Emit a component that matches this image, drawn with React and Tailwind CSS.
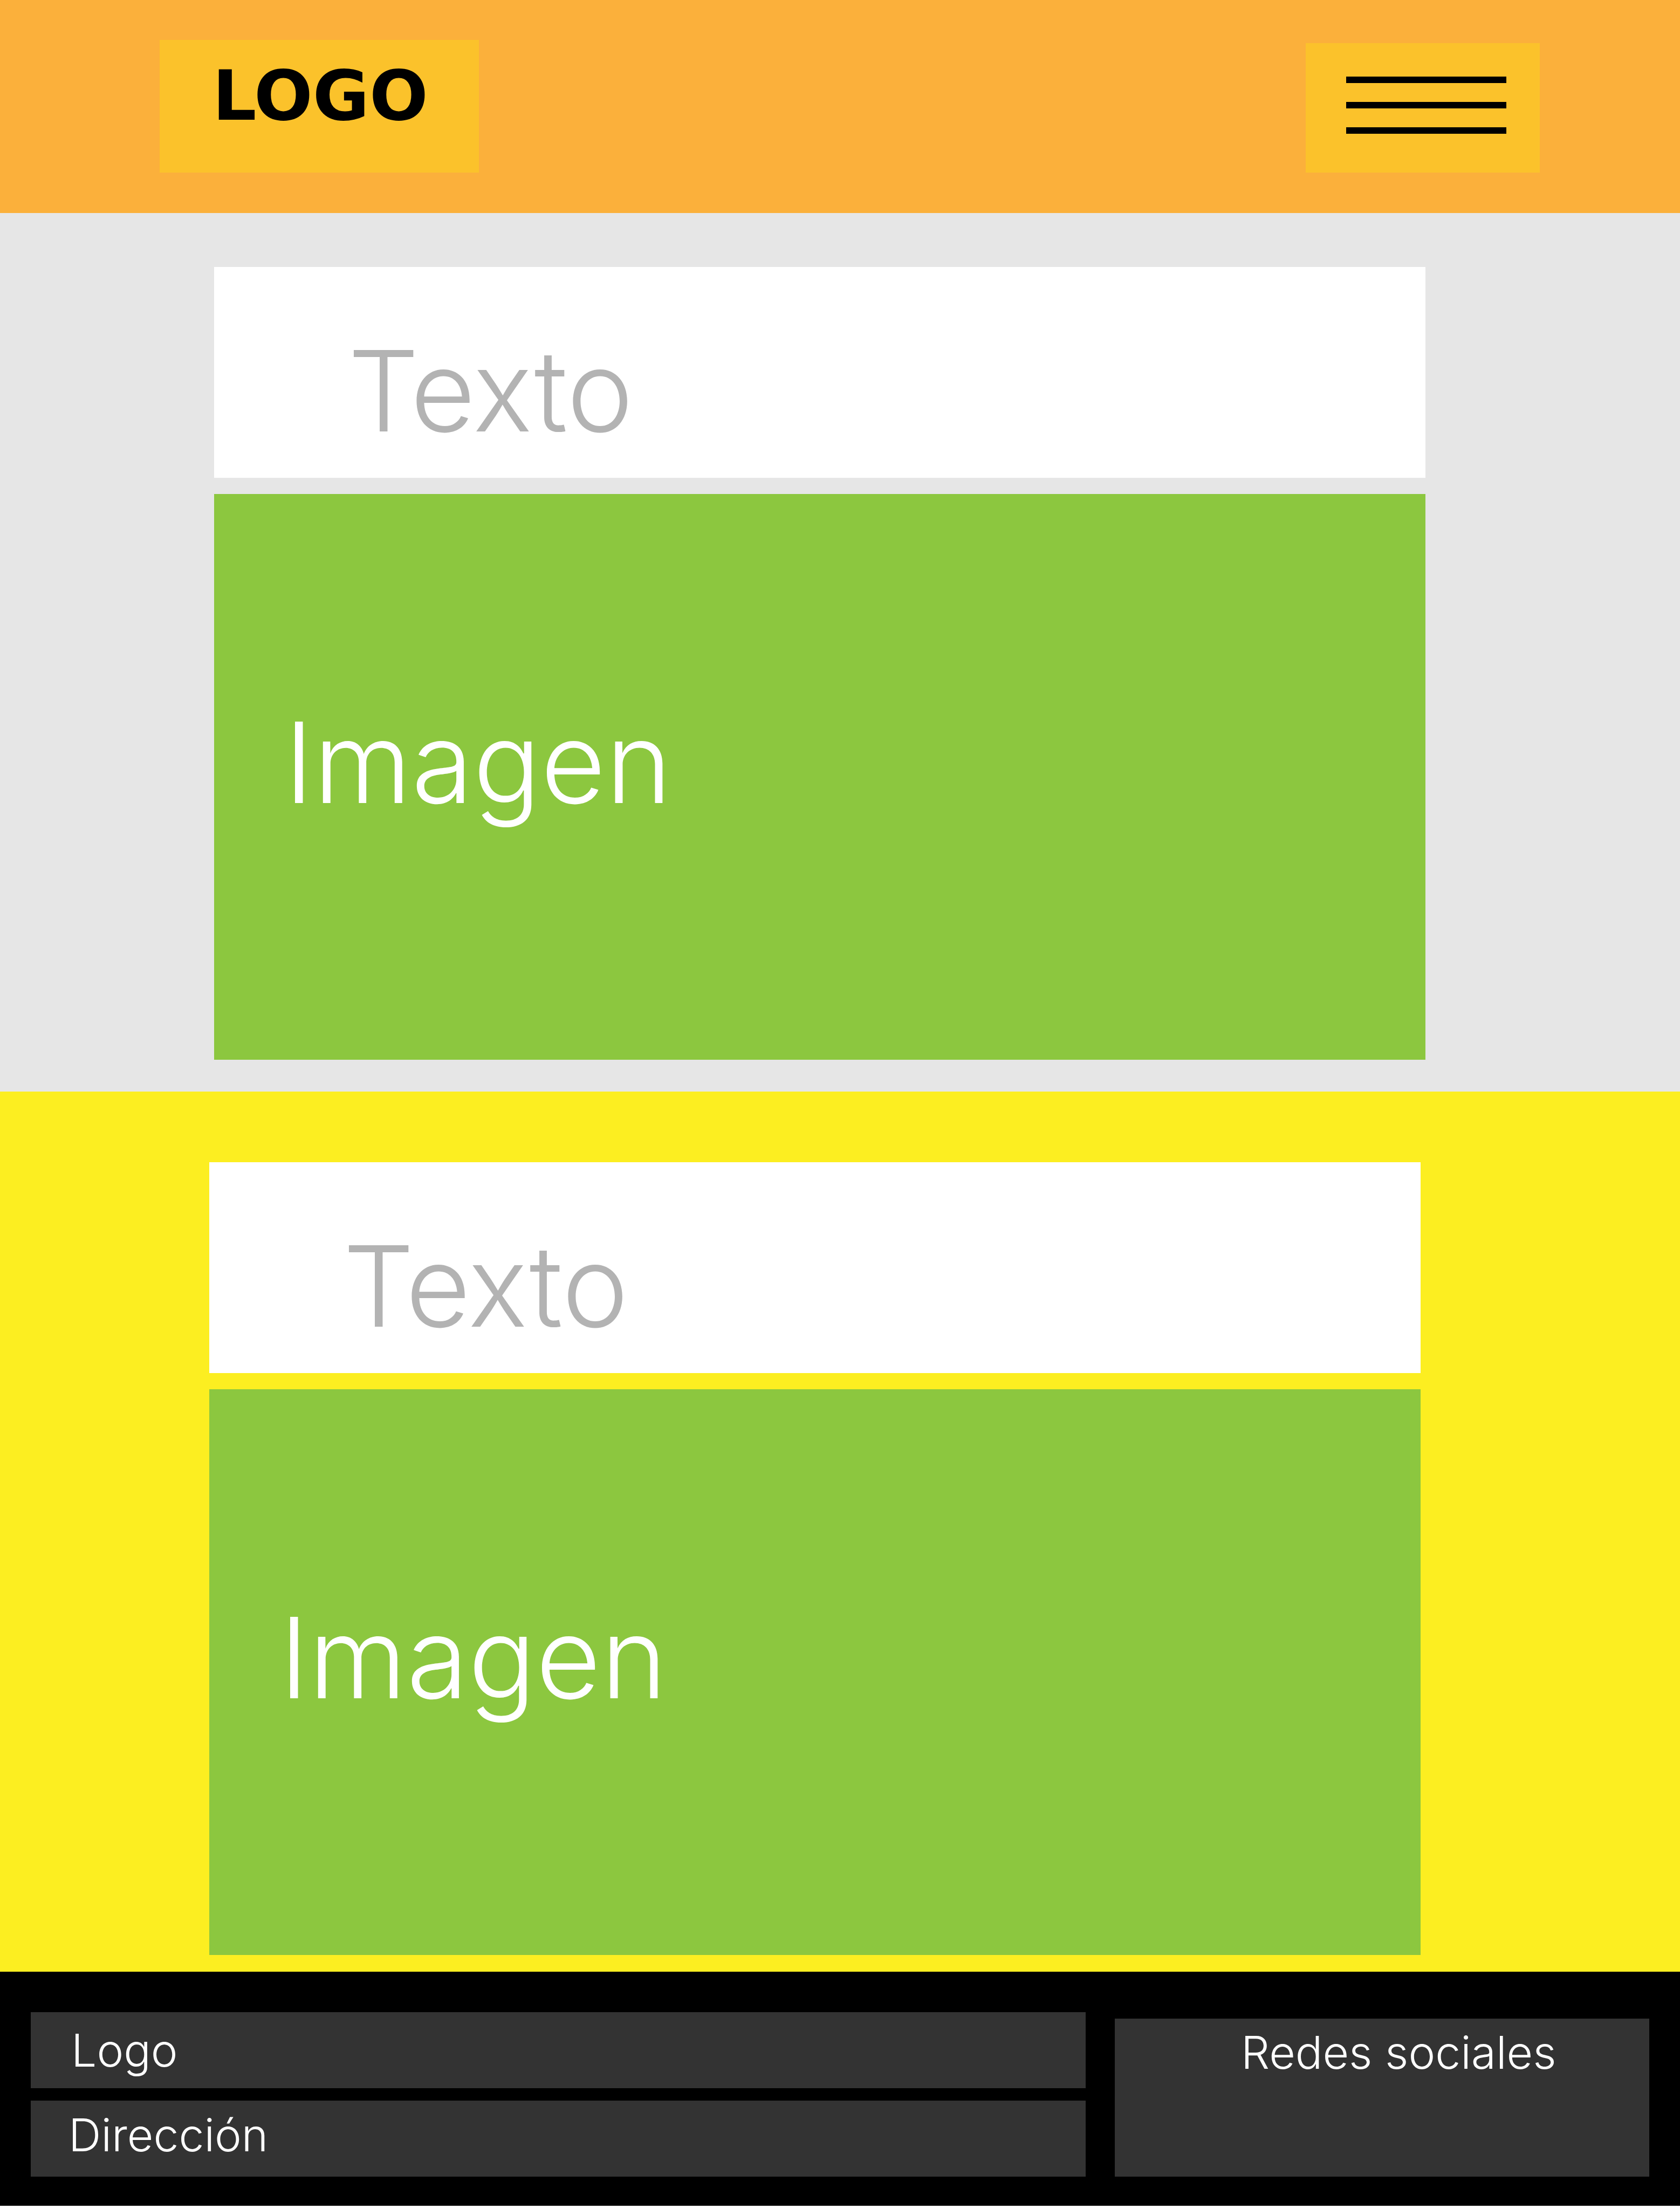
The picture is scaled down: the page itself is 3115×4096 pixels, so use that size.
function Section({ className, label }) {
  return (
    <section className={className} aria-label={label}>
      <div className="bg-white pt-[129px] pb-[62px] pl-[248px]">
        <h2 className="text-[208px] leading-[200px] font-light text-[#b3b3b3]">Texto</h2>
      </div>
      <div className="mt-[30px] h-[1049px] bg-[#8cc73f] pt-[397px] pl-[130px]">
        <p className="text-[208px] leading-[200px] font-light text-white">Imagen</p>
      </div>
    </section>
  );
}

export default function App() {
  return (
    <div className="flex min-h-screen flex-col bg-white pb-[6px] font-['Inter',sans-serif]">
      <header className="flex items-start justify-between bg-[#fbb03b] pt-[74px] pr-[260px] pb-[75px] pl-[296px]">
        <a
          href="#inicio"
          className="h-[246px] w-[592px] bg-[#fbc22b] pt-[38px] pl-[98px] font-['DejaVu_Sans',sans-serif] text-[128px] leading-[132px] font-bold text-black"
        >
          LOGO
        </a>
        <button
          type="button"
          aria-label="Abrir menú"
          className="mt-[6px] flex h-[240px] w-[434px] flex-col gap-[35px] bg-[#fbc22b] pt-[62px] pr-[62px] pl-[75px]"
        >
          <span className="h-[12px] w-full bg-black" />
          <span className="h-[12px] w-full bg-black" />
          <span className="h-[12px] w-full bg-black" />
        </button>
      </header>
      <main>
        <Section label="Primera sección" className="bg-[#e6e6e6] pt-[100px] pr-[472px] pb-[59px] pl-[397px]" />
        <Section label="Segunda sección" className="bg-[#fcee21] pt-[131px] pr-[481px] pb-[31px] pl-[388px]" />
      </main>
      <footer className="flex grow items-start gap-[54px] bg-black pt-[75px] pr-[57px] pb-[54px] pl-[57px] text-[84px] leading-[84px] font-light text-white">
        <div className="flex flex-1 flex-col gap-[23px]">
          <p className="h-[141px] bg-[#333333] pt-[29px] pl-[75px]">Logo</p>
          <address className="h-[141px] bg-[#333333] pt-[22px] pl-[70px] not-italic">Dirección</address>
        </div>
        <p className="mt-[12px] h-[293px] w-[991px] bg-[#333333] pt-[21px] pl-[234px]">Redes sociales</p>
      </footer>
    </div>
  );
}
